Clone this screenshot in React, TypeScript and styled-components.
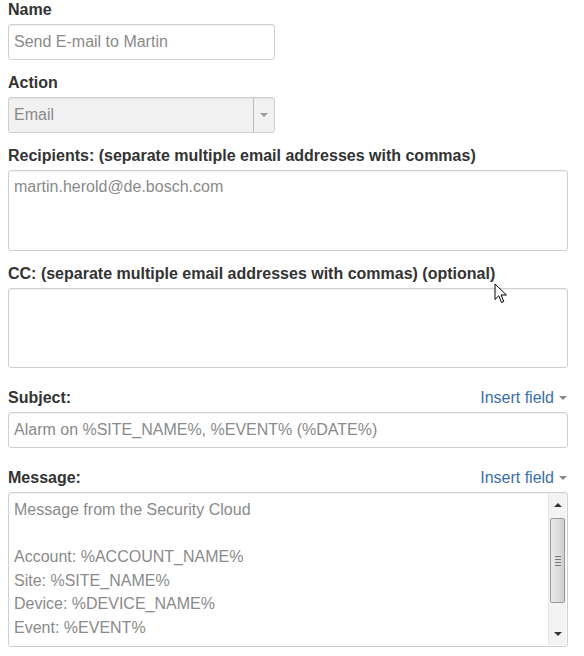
import { createGlobalStyle } from "styled-components";
import styled from "styled-components";

const Global = createGlobalStyle`
  body {
    margin: 0;
    background: #fff;
    font-family: "Liberation Sans", Arial, sans-serif;
  }
`

const Page = styled.div`
  position: relative;
  width: 560px;
  padding: 0 0 0 8px;
  display: flex;
  flex-direction: column;
`

const Group = styled.div<{ $top?: number }>`
  display: flex;
  flex-direction: column;
  margin-top: ${p => p.$top ?? 0}px;
`

const LabelRow = styled.div`
  display: flex;
  justify-content: space-between;
  align-items: center;
  height: 20px;
  margin-bottom: 4px;
`

const Label = styled.div`
  font-size: 16px;
  font-weight: bold;
  color: #333;
  line-height: 20px;
`

const InsertLink = styled.div`
  display: flex;
  align-items: center;
  gap: 5px;
  font-size: 16px;
  color: #3b6ea8;
  line-height: 20px;
  padding-right: 1px;
`

const Caret = styled.span<{ $color?: string }>`
  width: 0;
  height: 0;
  border-left: 4px solid transparent;
  border-right: 4px solid transparent;
  border-top: 4px solid ${p => p.$color ?? "#888"};
`

const Field = styled.div<{ $w?: number; $h: number; $gray?: boolean }>`
  box-sizing: border-box;
  width: ${p => (p.$w ? p.$w + "px" : "100%")};
  height: ${p => p.$h}px;
  border: 1px solid #cfcfcf;
  border-radius: 3px;
  box-shadow: inset 0 1px 1px rgba(0, 0, 0, 0.06);
  background: ${p => (p.$gray ? "#f1f1f1" : "#fff")};
  color: #8a8a8a;
  font-size: 16px;
  display: flex;
  overflow: hidden;
`

const FieldText = styled.div<{ $center?: boolean }>`
  flex: 1;
  padding: ${p => (p.$center ? "0 5px" : "6px 5px")};
  display: flex;
  align-items: ${p => (p.$center ? "center" : "flex-start")};
  line-height: 20px;
  white-space: nowrap;
`

const SelectButton = styled.div`
  width: 20px;
  border-left: 1px solid #bdbdbd;
  display: flex;
  align-items: center;
  justify-content: center;
`

const MessageText = styled.div`
  flex: 1;
  padding: 5px 5px;
  line-height: 23.5px;
  white-space: pre;
`

const ScrollBar = styled.div`
  width: 17px;
  margin: 1px 1px 1px 0;
  background: #f3f3f3;
  border-left: 1px solid #e6e6e6;
  display: flex;
  flex-direction: column;
  align-items: center;
`

const ScrollArrow = styled.div<{ $up?: boolean }>`
  height: 22px;
  display: flex;
  align-items: center;
  justify-content: center;
  &::after {
    content: "";
    border-left: 4px solid transparent;
    border-right: 4px solid transparent;
    ${p => (p.$up ? "border-bottom: 4px solid #333;" : "border-top: 4px solid #333;")}
  }
`

const Thumb = styled.div`
  box-sizing: border-box;
  width: 15px;
  height: 85px;
  margin-top: 2px;
  border: 1px solid #9a9a9a;
  border-radius: 2px;
  background: linear-gradient(to right, #e9e9e9, #dcdcdc 60%, #cfcfcf);
  display: flex;
  flex-direction: column;
  align-items: center;
  justify-content: center;
  gap: 2px;
`

const Grip = styled.span`
  width: 6px;
  height: 1px;
  background: #777;
`

const Cursor = styled.svg`
  position: absolute;
  left: 494px;
  top: 283px;
`

export default function App() {
  return (
    <Page>
      <Global />
      <Group>
        <LabelRow><Label>Name</Label></LabelRow>
        <Field $w={267} $h={36}><FieldText $center>Send E-mail to Martin</FieldText></Field>
      </Group>
      <Group $top={13}>
        <LabelRow><Label>Action</Label></LabelRow>
        <Field $w={267} $h={36} $gray>
          <FieldText $center>Email</FieldText>
          <SelectButton><Caret $color="#999" /></SelectButton>
        </Field>
      </Group>
      <Group $top={13}>
        <LabelRow><Label>Recipients: (separate multiple email addresses with commas)</Label></LabelRow>
        <Field $h={81}><FieldText>martin.herold@de.bosch.com</FieldText></Field>
      </Group>
      <Group $top={13}>
        <LabelRow><Label>CC: (separate multiple email addresses with commas) (optional)</Label></LabelRow>
        <Field $h={80}><FieldText /></Field>
      </Group>
      <Group $top={20}>
        <LabelRow>
          <Label>Subject:</Label>
          <InsertLink>Insert field<Caret /></InsertLink>
        </LabelRow>
        <Field $h={36}><FieldText $center>Alarm on %SITE_NAME%, %EVENT% (%DATE%)</FieldText></Field>
      </Group>
      <Group $top={20}>
        <LabelRow>
          <Label>Message:</Label>
          <InsertLink>Insert field<Caret /></InsertLink>
        </LabelRow>
        <Field $h={155}>
          <MessageText>{"Message from the Security Cloud\n\nAccount: %ACCOUNT_NAME%\nSite: %SITE_NAME%\nDevice: %DEVICE_NAME%\nEvent: %EVENT%"}</MessageText>
          <ScrollBar>
            <ScrollArrow $up />
            <Thumb><Grip /><Grip /><Grip /><Grip /></Thumb>
            <div style={{ flex: 1 }} />
            <ScrollArrow />
          </ScrollBar>
        </Field>
      </Group>
      <Cursor width="14" height="22" viewBox="0 0 14 22">
        <path d="M1 1 L1 16.5 L4.8 12.8 L7.5 19.5 L9.8 18.5 L7.1 12 L12.4 12 Z" fill="#fff" stroke="#000" strokeWidth="1" strokeLinejoin="round" />
      </Cursor>
    </Page>
  )
}
